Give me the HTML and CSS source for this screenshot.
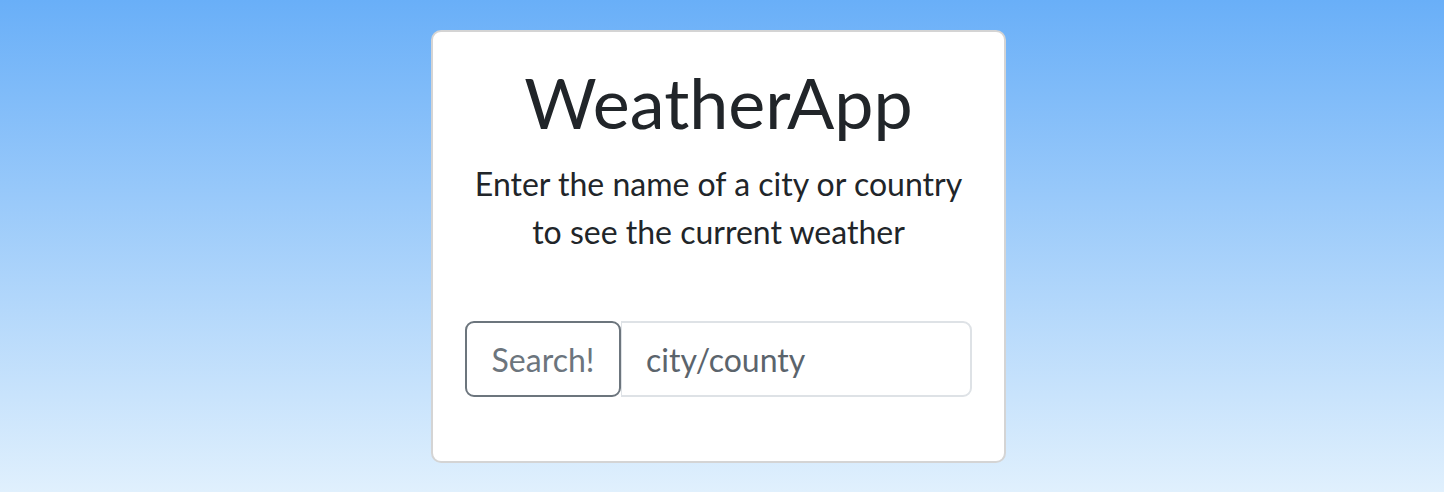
FILE: index.html
```html
<!DOCTYPE html>
<html lang="en">
<head>
<meta charset="utf-8">
<title>WeatherApp</title>
<link rel="stylesheet" href="styles.css">
</head>
<body>
<main class="page">
  <section class="card">
    <h1 class="title">WeatherApp</h1>
    <p class="lead">Enter the name of a city or country<br>to see the current weather</p>
    <form class="search-group">
      <button type="button" class="search-btn">Search!</button>
      <input class="search-input" type="text" value="city/county">
    </form>
  </section>
</main>
</body>
</html>
```

FILE: styles.css
```css
* { box-sizing: border-box; }
html, body { margin: 0; padding: 0; }
body {
  min-height: 100vh;
  background: linear-gradient(180deg, #69aff8 0%, #e0f0fd 100%);
  font-family: Lato, "Open Sans", sans-serif;
  color: #212529;
}
.page {
  display: flex;
  justify-content: center;
  padding: 30px 7px 0 0;
}
.card {
  width: 575px;
  height: 433px;
  background: #fff;
  border: 2px solid #d4d4d4;
  border-radius: 10px;
  padding: 27px 32px 0;
  text-align: center;
}
.title {
  margin: 0;
  font-size: 70px;
  font-weight: 400;
  line-height: 86px;
  color: #212529;
}
.lead {
  margin: 15px 0 0;
  font-size: 32px;
  font-weight: 400;
  line-height: 48px;
  color: #212529;
}
.search-group {
  display: flex;
  margin-top: 65px;
  height: 76px;
}
.search-btn {
  width: 156px;
  flex: none;
  font-family: inherit;
  font-size: 32px;
  font-weight: 400;
  color: #6c757d;
  background: #fff;
  border: 2px solid #6c757d;
  border-radius: 9px;
  padding: 0;
}
.search-input {
  flex: 1;
  min-width: 0;
  font-family: inherit;
  font-size: 32px;
  font-weight: 400;
  color: #5b646c;
  border: 2px solid #dee2e6;
  border-left-width: 1px;
  border-radius: 0 9px 9px 0;
  padding: 0 0 0 24px;
  outline: none;
}
```
